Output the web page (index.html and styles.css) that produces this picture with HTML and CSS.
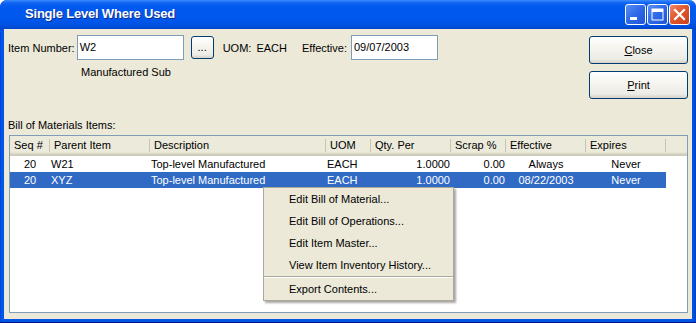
FILE: index.html
```html
<!DOCTYPE html>
<html lang="en">
<head>
    <meta charset="UTF-8">
    <title>Single Level Where Used</title>
    <link rel="stylesheet" href="styles.css">
</head>
<body>
    <div class="window">
        <div class="titlebar">
            <div class="title">Single Level Where Used</div>
            <div class="caption-btn">
                <svg width="21" height="21" viewBox="0 0 21 21"><rect x="5" y="13" width="7" height="3" fill="#fff"/></svg>
            </div>
            <div class="caption-btn">
                <svg width="21" height="21" viewBox="0 0 21 21"><rect x="5" y="5" width="11" height="11" fill="none" stroke="#fff" stroke-width="1"/><rect x="5" y="5" width="11" height="3" fill="#fff"/></svg>
            </div>
            <div class="caption-btn close-btn">
                <svg width="21" height="21" viewBox="0 0 21 21"><path d="M6 6 L15 15 M15 6 L6 15" stroke="#fff" stroke-width="2.2" stroke-linecap="square"/></svg>
            </div>
        </div>
        <div class="frame">
            <div class="client">
                <div class="top">
                    <div class="form">
                        <div class="row">
                            <span>Item Number:</span>
                            <div class="field item-field">W2</div>
                            <div class="xp-btn browse">...</div>
                            <span class="uom">UOM:</span>
                            <span class="uom-value">EACH</span>
                            <span class="eff-label">Effective:</span>
                            <div class="field date-field">09/07/2003</div>
                        </div>
                        <div class="item-desc">Manufactured Sub</div>
                    </div>
                    <div class="buttons">
                        <div class="xp-btn big"><u>C</u>lose</div>
                        <div class="xp-btn big"><u>P</u>rint</div>
                    </div>
                </div>
                <div class="list-label">Bill of Materials Items:</div>
                <div class="list">
                    <div class="grid header">
                        <div class="hcell">Seq #</div>
                        <div class="hcell">Parent Item</div>
                        <div class="hcell">Description</div>
                        <div class="hcell">UOM</div>
                        <div class="hcell">Qty. Per</div>
                        <div class="hcell">Scrap %</div>
                        <div class="hcell">Effective</div>
                        <div class="hcell">Expires</div>
                    </div>
                    <div class="grid row-item">
                        <div class="center">20</div>
                        <div>W21</div>
                        <div>Top-level Manufactured</div>
                        <div>EACH</div>
                        <div class="num">1.0000</div>
                        <div class="num">0.00</div>
                        <div class="center">Always</div>
                        <div class="center">Never</div>
                    </div>
                    <div class="grid row-item selected">
                        <div class="center">20</div>
                        <div>XYZ</div>
                        <div>Top-level Manufactured</div>
                        <div>EACH</div>
                        <div class="num">1.0000</div>
                        <div class="num">0.00</div>
                        <div class="center">08/22/2003</div>
                        <div class="center">Never</div>
                    </div>
                </div>
            </div>
        </div>
        <div class="menu">
            <div class="menu-item">Edit Bill of Material...</div>
            <div class="menu-item">Edit Bill of Operations...</div>
            <div class="menu-item">Edit Item Master...</div>
            <div class="menu-item">View Item Inventory History...</div>
            <div class="menu-sep"></div>
            <div class="menu-item">Export Contents...</div>
        </div>
    </div>
</body>
</html>
```

FILE: styles.css
```css
body {
    margin: 0;
    background: #ffffff;
    font-family: "Liberation Sans", Arial, sans-serif;
    font-size: 11px;
    color: #000000;
}
.window {
    position: relative;
    width: 696px;
    height: 323px;
    border-radius: 7px 7px 0 0;
    overflow: hidden;
    background: #0054e3;
    display: flex;
    flex-direction: column;
}
.titlebar {
    height: 29px;
    flex: none;
    display: flex;
    align-items: center;
    gap: 1px;
    padding: 0 6px 0 25px;
    background: linear-gradient(#3d8dfb 0, #1a6ef5 2px, #0a5ef0 4px, #0058ee 8px, #0057ec 20px, #0050e0 26px, #0043c8 29px);
}
.title {
    flex: 1;
    color: #ffffff;
    font-weight: bold;
    font-size: 13px;
    letter-spacing: -0.2px;
    text-shadow: 1px 1px 0 #0f2c8c;
    padding-bottom: 2px;
}
.caption-btn {
    width: 21px;
    height: 21px;
    box-sizing: border-box;
    border: 1px solid #ffffff;
    border-radius: 3px;
    background: linear-gradient(135deg, #5a8ff5 0, #2e68e8 50%, #1f55d8 100%);
    display: flex;
}
.caption-btn svg {
    margin: -1px;
}
.close-btn {
    background: linear-gradient(135deg, #f08a6a 0, #e1582f 45%, #c8401a 100%);
}
.frame {
    flex: 1;
    padding: 0 4px 4px;
    background: linear-gradient(to right, #0a2fc4 0, #0058ee 1px, #0055e5 3px, #0055e5 calc(100% - 3px), #0040c0 100%);
    box-shadow: inset 0 -1px 0 #00138c;
}
.client {
    height: 290px;
    box-sizing: border-box;
    background: #ece9d8;
    padding: 6px 4px 0 4px;
    display: flex;
    flex-direction: column;
}
.top {
    height: 84px;
    flex: none;
    display: flex;
}
.form {
    flex: 1;
}
.row {
    display: flex;
    align-items: center;
    height: 25px;
}
.field {
    height: 25px;
    box-sizing: border-box;
    border: 1px solid #7f9db9;
    background: #ffffff;
    padding-left: 2px;
    line-height: 23px;
}
.item-field {
    width: 107px;
    margin-left: 2px;
}
.date-field {
    width: 87px;
    margin-left: 4px;
}
.xp-btn {
    box-sizing: border-box;
    border: 1px solid #003c74;
    border-radius: 3px;
    background: linear-gradient(#ffffff 0, #f6f5f0 40%, #ecebe6 85%, #d6d0c5 100%);
    display: flex;
    align-items: center;
    justify-content: center;
}
.browse {
    width: 23px;
    height: 23px;
    margin-left: 7px;
    padding-bottom: 2px;
}
.uom {
    margin-left: 9px;
}
.uom-value {
    margin-left: 5px;
}
.eff-label {
    margin-left: 15px;
}
.item-desc {
    margin: 6px 0 0 73px;
}
.buttons {
    width: 99px;
    margin: 1px 0 0 0;
    display: flex;
    flex-direction: column;
    gap: 7px;
}
.big {
    height: 28px;
}
.list-label {
    height: 13px;
    line-height: 13px;
    margin-bottom: 3px;
}
.list {
    height: 178px;
    box-sizing: border-box;
    margin-left: 1px;
    width: 679px;
    border: 1px solid #7f9db9;
    background: #ffffff;
}
.grid {
    display: grid;
    grid-template-columns: 40px 100px 176px 45px 80px 55px 80px 80px;
}
.header {
    height: 20px;
    background: linear-gradient(#ebeadb 0, #ebeadb 16px, #e2decd 17px, #d6d2c2 18px, #cbc7b8 20px);
}
.hcell {
    padding: 0 0 0 4px;
    border-right: 1px solid #c7c5b2;
    margin: 3px 0 4px;
    line-height: 13px;
}
.row-item {
    width: 656px;
    height: 16px;
    line-height: 16px;
}
.row-item > div {
    padding-left: 1px;
    white-space: nowrap;
}
.row-item .num {
    text-align: right;
    padding-right: 1px;
}
.row-item .center {
    text-align: center;
    padding-left: 0;
}
.selected {
    background: #316ac5;
    color: #ffffff;
}
.menu {
    position: absolute;
    left: 263px;
    top: 187px;
    width: 191px;
    box-sizing: border-box;
    background: #ece9d8;
    border: 1px solid #aca899;
    box-shadow: 2px 2px 2px rgba(0, 0, 0, 0.35);
}
.menu-item {
    height: 22px;
    line-height: 22px;
    padding-left: 25px;
}
.menu-sep {
    border-top: 1px solid #aca899;
    border-bottom: 1px solid #ffffff;
}
```
